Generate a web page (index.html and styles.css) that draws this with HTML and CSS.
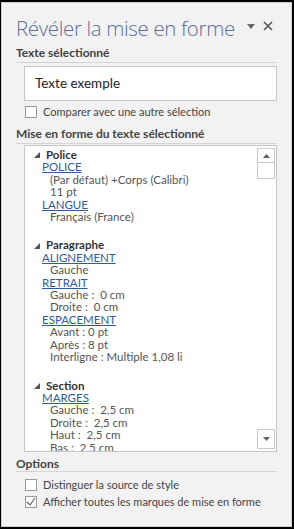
FILE: index.html
```html
<!DOCTYPE html>
<html lang="fr">
<head>
    <meta charset="UTF-8">
    <title>Révéler la mise en forme</title>
    <link rel="stylesheet" href="styles.css">
</head>
<body>
    <div class="pane">
        <div class="head">
            <h1>Révéler la mise en forme</h1>
            <div class="tools">
                <svg width="8" height="5" viewBox="0 0 8 5"><path d="M0 0h8L4 5z" fill="#666"/></svg>
                <svg width="10" height="10" viewBox="0 0 10 10"><path d="M1 1l8 8M9 1l-8 8" stroke="#555" stroke-width="1.6"/></svg>
            </div>
        </div>

        <h2 class="label">Texte sélectionné</h2>
        <div class="sample">Texte exemple</div>
        <label class="check first"><span class="box"></span>Comparer avec une autre sélection</label>

        <h2 class="label format">Mise en forme du texte sélectionné</h2>
        <div class="list">
            <div class="tree">
                <div class="group"><span class="arrow"></span>Police</div>
                <a class="key">POLICE</a>
                <div class="val">(Par défaut) +Corps (Calibri)</div>
                <div class="val">11 pt</div>
                <a class="key">LANGUE</a>
                <div class="val">Français (France)</div>
                <div class="blank"></div>
                <div class="group"><span class="arrow"></span>Paragraphe</div>
                <a class="key">ALIGNEMENT</a>
                <div class="val">Gauche</div>
                <a class="key">RETRAIT</a>
                <div class="val">Gauche :&nbsp; 0 cm</div>
                <div class="val">Droite :&nbsp; 0 cm</div>
                <a class="key">ESPACEMENT</a>
                <div class="val">Avant : 0 pt</div>
                <div class="val">Après : 8 pt</div>
                <div class="val">Interligne : Multiple 1,08 li</div>
                <div class="blank"></div>
                <div class="group"><span class="arrow"></span>Section</div>
                <a class="key">MARGES</a>
                <div class="val">Gauche :&nbsp; 2,5 cm</div>
                <div class="val">Droite :&nbsp; 2,5 cm</div>
                <div class="val">Haut :&nbsp; 2,5 cm</div>
                <div class="val">Bas :&nbsp; 2,5 cm</div>
            </div>
            <div class="scroll">
                <div class="btn"><svg width="7" height="4" viewBox="0 0 7 4"><path d="M0 4h7L3.5 0z" fill="#606060"/></svg></div>
                <div class="thumb"></div>
                <div class="track"></div>
                <div class="btn down"><svg width="7" height="4" viewBox="0 0 7 4"><path d="M0 0h7L3.5 4z" fill="#606060"/></svg></div>
            </div>
        </div>

        <h2 class="label options">Options</h2>
        <label class="check"><span class="box"></span>Distinguer la source de style</label>
        <label class="check"><span class="box"><svg width="10" height="9" viewBox="0 0 10 9"><path d="M1 5l3 3 5-7" fill="none" stroke="#555" stroke-width="1.1"/></svg></span>Afficher toutes les marques de mise en forme</label>
    </div>
</body>
</html>
```

FILE: styles.css
```css
html,
body {
    margin: 0;
    background: #000;
}

.pane {
    box-sizing: border-box;
    width: 291px;
    height: 525px;
    margin: 2px 2px 2px 1px;
    padding: 0 14px 0 14px;
    background: #f2f2f2;
    border: 1px solid #d0d0d0;
    font-family: Lato, "Liberation Sans", sans-serif;
    font-size: 11.5px;
    color: #444;
}

.head {
    display: flex;
    justify-content: space-between;
    align-items: center;
    padding-top: 11px;
    height: 28px;
}

h1 {
    margin: 0;
    font-family: "Open Sans", sans-serif;
    font-weight: 300;
    font-size: 20.5px;
    line-height: 28px;
    color: #5b6e98;
    letter-spacing: -0.35px;
}

.tools {
    display: flex;
    align-items: center;
    gap: 8px;
    padding-right: 4px;
    margin-top: -4px;
}

.label {
    margin: 3px 0 3px 0;
    padding-bottom: 2px;
    font-size: 12px;
    font-weight: bold;
    color: #444;
    border-bottom: 1px solid #d4d4d4;
    line-height: 15px;
}

.format {
    margin: 8px 0 1px 0;
}

.options {
    margin: 5px 0 0 0;
    padding-bottom: 0;
    line-height: 14px;
}

.sample {
    margin-left: 8px;
    height: 33px;
    line-height: 33px;
    padding-left: 10px;
    background: #fff;
    border: 1px solid #c6c6c6;
    font-size: 13.5px;
    color: #222;
}

.check {
    display: flex;
    align-items: center;
    margin: 6px 0 0 9px;
    height: 13px;
    font-size: 11px;
    color: #444;
}

.check.first {
    margin-top: 4px;
}

.check + .check {
    margin-top: 4px;
}

.box {
    display: flex;
    align-items: center;
    justify-content: center;
    box-sizing: border-box;
    width: 12px;
    height: 12px;
    margin-right: 6px;
    background: #fff;
    border: 1px solid #9a9a9a;
}

.list {
    display: flex;
    box-sizing: border-box;
    margin-left: 8px;
    height: 307px;
    background: #fff;
    border: 1px solid #c6c6c6;
    overflow: hidden;
}

.tree {
    flex: 1;
    padding: 3px 0 0 9px;
    line-height: 12.4px;
    color: #555;
}

.group {
    display: flex;
    align-items: center;
    font-weight: bold;
    color: #333;
}

.arrow {
    width: 0;
    height: 0;
    margin-right: 6px;
    border-left: 6px solid transparent;
    border-bottom: 6px solid #555;
}

.key {
    display: block;
    margin-left: 8px;
    color: #2e5c9e;
    text-decoration: underline;
}

.val {
    margin-left: 16px;
}

.blank {
    height: 16px;
}

.scroll {
    display: flex;
    flex-direction: column;
    width: 18px;
    margin: 2px 1px 2px 0;
}

.btn,
.thumb {
    display: flex;
    align-items: center;
    justify-content: center;
    box-sizing: border-box;
    height: 15px;
    border: 1px solid #c9c9c9;
    background: #fff;
}

.thumb {
    height: 16px;
    border-top: 0;
}

.track {
    flex: 1;
}

.down {
    height: 20px;
}
```
